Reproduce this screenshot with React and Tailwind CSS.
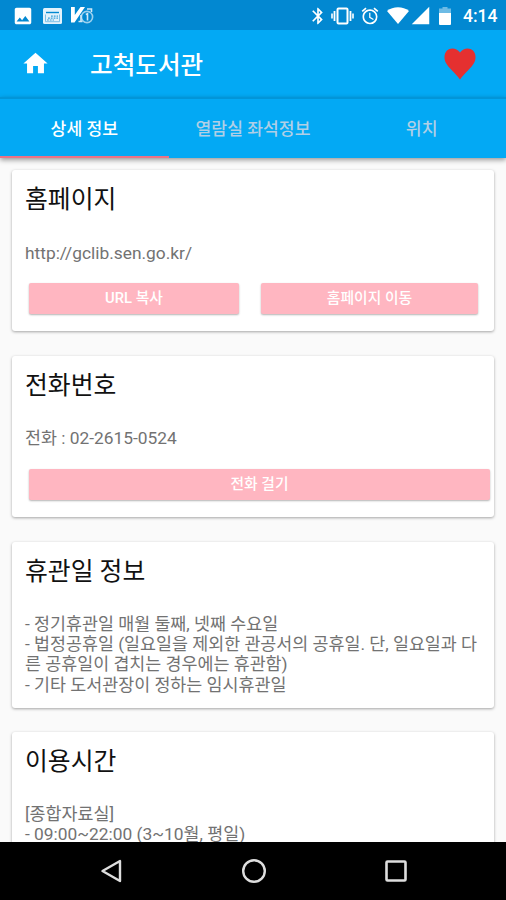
import {
  MdAlarm,
  MdBluetooth,
  MdHome,
  MdImage,
  MdSignalCellular4Bar,
} from "react-icons/md";

const tabs = [
  { id: "detail", label: "상세 정보" },
  { id: "seats", label: "열람실 좌석정보" },
  { id: "location", label: "위치" },
];

function StatusBar() {
  return (
    <div className="flex h-[30px] shrink-0 items-center bg-[#0288d1] pt-px text-white">
      <MdImage className="ml-[12px] h-[22px] w-[22px]" />
      {/* Calendar notification */}
      <svg className="ml-[9px] h-[16px] w-[19px]" viewBox="0 0 19 16">
        <rect width="19" height="16" rx="1.5" fill="#e3f2fc" />
        <path d="M3 4.5h13" stroke="#0288d1" strokeWidth="1.4" />
        <path d="M2.5 6.5v7.2h14V6.5" fill="none" stroke="#7fc0e6" strokeWidth="1" />
        <path d="M8 8.2h7M5 10.2h10M4 12h7" stroke="#3b9fd8" strokeWidth="1.2" strokeDasharray="1.8 1" />
      </svg>
      {/* Vaccine app notification */}
      <svg className="ml-[9px] h-[19px] w-[23px]" viewBox="0 0 23 19">
        <path d="M0 1h3.800v8L9.500 1H14L3.500 16.500H0z" fill="#fff" />
        <circle cx="16" cy="11" r="5.600" fill="#0288d1" stroke="#9bd0ee" strokeWidth="1.600" />
        <path d="M14.800 8.500l1.700-.7v6.700M7.500 15.500h4M10 9v6M16 3h4.500v3" fill="none" stroke="#cfe8f7" strokeWidth="1.600" />
      </svg>
      <div className="ml-auto flex items-center">
        <MdBluetooth className="h-[20px] w-[20px]" />
        {/* Vibrate mode */}
        <svg className="ml-[3px] h-[18px] w-[23px]" viewBox="0 0 23 18" fill="none" stroke="currentColor">
          <rect x="6.500" y="1.500" width="10" height="15" rx="1" strokeWidth="2" />
          <path d="M3.500 4v10M19.500 4v10" strokeWidth="1.800" />
          <path d="M1 6.500v5M22 6.500v5" strokeWidth="1.600" />
        </svg>
        <MdAlarm className="ml-[6px] h-[20px] w-[20px]" />
        <svg className="ml-[7px] h-[17px] w-[22px]" viewBox="0 0 22 17">
          <path d="M0 4C6-1 16-1 22 4L11 17z" fill="currentColor" />
        </svg>
        <MdSignalCellular4Bar className="ml-[1px] h-[21px] w-[21px]" />
        <svg className="ml-[8px] h-[18px] w-[12px]" viewBox="0 0 12 18">
          <path d="M3.500 0h5v1.500H12V7H0V1.500h3.500z" fill="#6dbbe5" />
          <path d="M0 6h12v11a1 1 0 0 1-1 1H1a1 1 0 0 1-1-1z" fill="currentColor" />
        </svg>
        <span className="ml-[12px] mr-[8px] w-[35px] whitespace-nowrap pt-[2px] font-[Roboto] text-[17.5px] font-medium leading-none">
          4:14
        </span>
      </div>
    </div>
  );
}

function Toolbar() {
  return (
    <header className="flex h-[67px] shrink-0 items-center bg-[#03a9f4] text-white">
      <MdHome className="ml-[20.5px] h-[29px] w-[29px]" />
      <h1 className="ml-[40.5px] pt-[5px] text-[24.6px] font-medium leading-none">고척도서관</h1>
      <svg className="ml-auto mr-[30px] h-[32px] w-[32px]" viewBox="0 0 32 32">
        <path
          d="M16 4.500C12.500-.5 6-.5 3 2.500C0 5.500-.3 11 2 15c2.500 5 9 9.500 14 16.500C21 24.500 27.500 20 30 15c2.300-4 2-9.500-1-12.500C26-.5 19.500-.5 16 4.500z"
          fill="#e53030"
        />
      </svg>
    </header>
  );
}

function TabBar({ active }) {
  return (
    <nav className="relative z-10 grid h-[60.5px] shrink-0 grid-cols-3 border-t-2 border-[#0295d8] bg-[#03a9f4] text-[17.2px] font-medium shadow-[0_2px_5px_rgba(0,0,0,0.4)]">
      {tabs.map(({ id, label }) => (
        <button
          key={id}
          className={`border-b-2 pt-[4px] leading-none ${
            active === id ? "border-[#ec7385] text-white" : "border-transparent text-[#b0cfe6]"
          }`}
        >
          {label}
        </button>
      ))}
    </nav>
  );
}

function InfoCard({ title, className, children }) {
  return (
    <section
      className={`shrink-0 rounded-[3px] bg-white px-[13px] pt-[14px] shadow-[0_1px_3px_rgba(0,0,0,0.35)] ${className}`}
    >
      <h2 className="text-[24.8px] leading-[32px] text-[#111]">{title}</h2>
      {children}
    </section>
  );
}

function ActionButton({ className, children }) {
  return (
    <button
      className={`h-[31px] rounded-[2px] bg-[#ffb6c1] text-[14.8px] font-medium leading-none text-white shadow-[0_1px_2px_rgba(0,0,0,0.3)] ${className}`}
    >
      {children}
    </button>
  );
}

function NavigationBar() {
  return (
    <footer className="flex h-[58px] shrink-0 items-center bg-black text-[#dedede]">
      <svg className="ml-[100px] h-[24px] w-[22px]" viewBox="0 0 22 24" fill="none" stroke="currentColor" strokeWidth="2.400">
        <path d="M20 2v20L2.500 12z" strokeLinejoin="round" />
      </svg>
      <svg className="ml-[119px] h-[26px] w-[26px]" viewBox="0 0 26 26" fill="none" stroke="currentColor" strokeWidth="2.400">
        <circle cx="13" cy="13" r="10.800" />
      </svg>
      <svg className="ml-[118px] h-[22px] w-[22px]" viewBox="0 0 22 22" fill="none" stroke="currentColor" strokeWidth="2.600">
        <rect x="1.500" y="1.500" width="19" height="19" rx="1" />
      </svg>
    </footer>
  );
}

export default function App() {
  return (
    <div className="flex h-[900px] w-[506px] flex-col overflow-hidden bg-[#fafafa] font-[Roboto,'Noto_Sans_CJK_KR',sans-serif]">
      <StatusBar />
      <Toolbar />
      <TabBar active="detail" />

      <main className="flex min-h-0 flex-1 flex-col overflow-hidden px-[12px] pt-[12.5px] text-[17.35px] leading-[20.2px] text-[#727272]">
        <InfoCard title="홈페이지" className="mb-[25px] h-[161px]">
          <p className="mt-[27px]">http://gclib.sen.go.kr/</p>
          <div className="mt-[20px] flex gap-[22px] pl-[4px]">
            <ActionButton className="w-[210px]">URL 복사</ActionButton>
            <ActionButton className="w-[217px]">홈페이지 이동</ActionButton>
          </div>
        </InfoCard>

        <InfoCard title="전화번호" className="mb-[25px] h-[161px]">
          <p className="mt-[26px]">전화 : 02-2615-0524</p>
          <div className="-mr-[9px] mt-[21px] flex pl-[4px]">
            <ActionButton className="w-[461px]">전화 걸기</ActionButton>
          </div>
        </InfoCard>

        <InfoCard title="휴관일 정보" className="mb-[24px] h-[166px]">
          <p className="mt-[26px] whitespace-nowrap">
            - 정기휴관일 매월 둘째, 넷째 수요일
            <br />- 법정공휴일 (일요일을 제외한 관공서의 공휴일. 단, 일요일과 다
            <br />른 공휴일이 겹치는 경우에는 휴관함)
            <br />- 기타 도서관장이 정하는 임시휴관일
          </p>
        </InfoCard>

        <InfoCard title="이용시간" className="h-[166px]">
          <p className="mt-[26px] whitespace-nowrap">
            [종합자료실]
            <br />- 09:00~22:00 (3~10월, 평일)
          </p>
        </InfoCard>
      </main>

      <NavigationBar />
    </div>
  );
}
